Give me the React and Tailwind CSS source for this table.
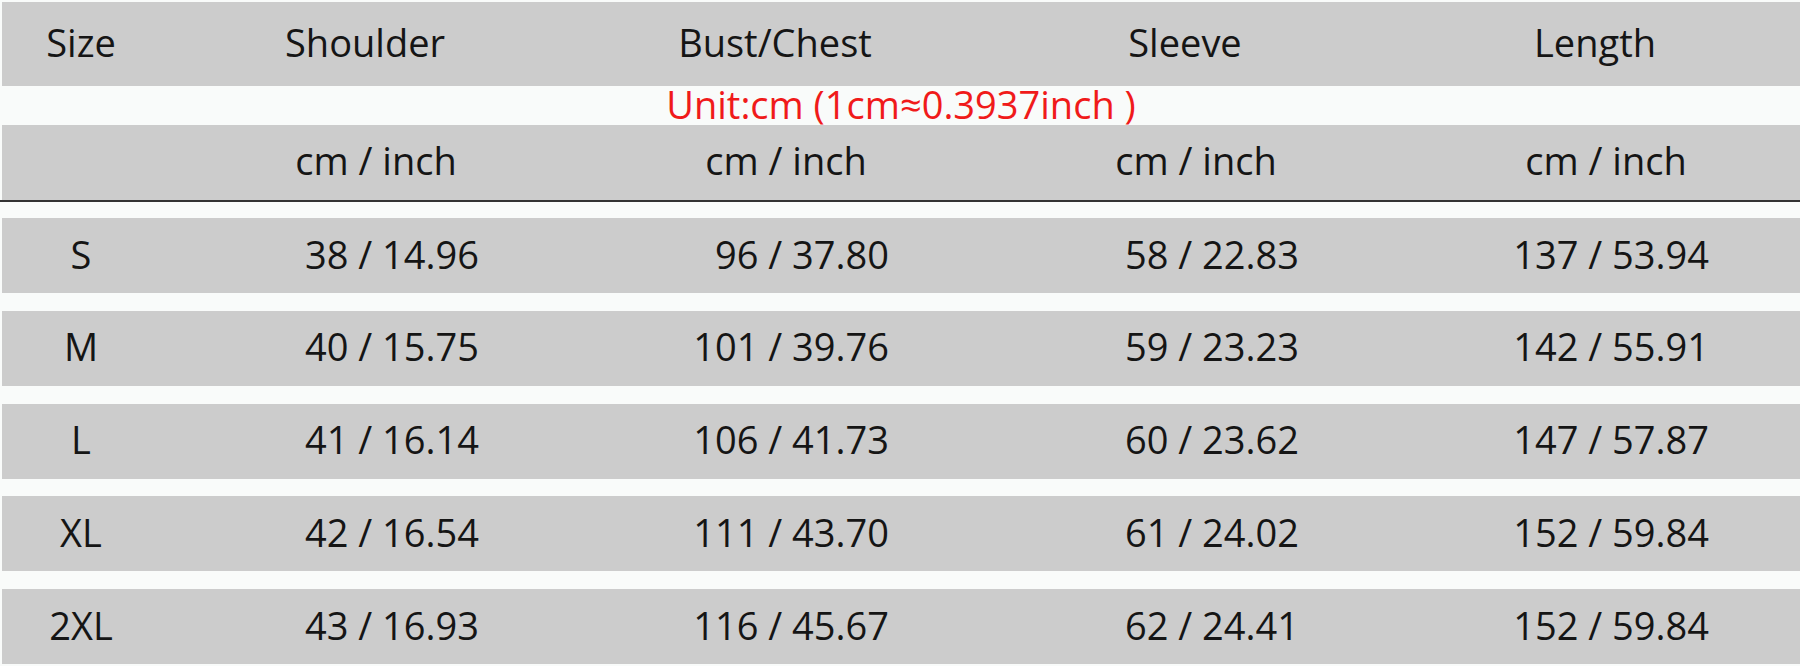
import React from 'react'

const cols = ['Shoulder', 'Bust/Chest', 'Sleeve', 'Length']

const rows = [
  ['S', '38 / 14.96', '96 / 37.80', '58 / 22.83', '137 / 53.94'],
  ['M', '40 / 15.75', '101 / 39.76', '59 / 23.23', '142 / 55.91'],
  ['L', '41 / 16.14', '106 / 41.73', '60 / 23.62', '147 / 57.87'],
  ['XL', '42 / 16.54', '111 / 43.70', '61 / 24.02', '152 / 59.84'],
  ['2XL', '43 / 16.93', '116 / 45.67', '62 / 24.41', '152 / 59.84'],
]

const grid = 'grid grid-cols-[158px_410px_410px_410px_410px]'

export default function App() {
  return (
    <div
      className="w-[1800px] h-[666px] overflow-hidden bg-[#f9fbfa] pt-[2px] pl-[2px] text-[38px] font-normal leading-none text-[#151515]"
      style={{ fontFamily: '"Open Sans", "Noto Sans", sans-serif' }}
    >
      {/* header */}
      <div className={`${grid} h-[84px] items-center bg-[#cccccc] pb-[5px]`}>
        <div className="text-center">Size</div>
        {cols.map((c) => (
          <div key={c} className="text-center">{c}</div>
        ))}
      </div>

      <div className="h-[39px] flex items-center justify-center text-[#f01a1a] pb-[3px]">
        Unit:cm (1cm≈0.3937inch )
      </div>

      <div className={`${grid} h-[75px] items-center bg-[#cccccc] pb-[5px]`}>
        <div></div>
        {cols.map((c) => (
          <div key={c} className="text-center pl-[22px]">cm / inch</div>
        ))}
      </div>
      <div className="h-[2px] bg-[#333333] -ml-[2px]"></div>

      <div className="flex flex-col gap-[17.75px] pt-[16px]">
        {rows.map((r) => (
          <div key={r[0]} className={`${grid} h-[75px] items-center bg-[#cccccc] pb-[4px]`}>
            <div className="text-center">{r[0]}</div>
            {r.slice(1).map((v, i) => (
              <div key={i} className="text-right pr-[91px]">{v}</div>
            ))}
          </div>
        ))}
      </div>
    </div>
  )
}
